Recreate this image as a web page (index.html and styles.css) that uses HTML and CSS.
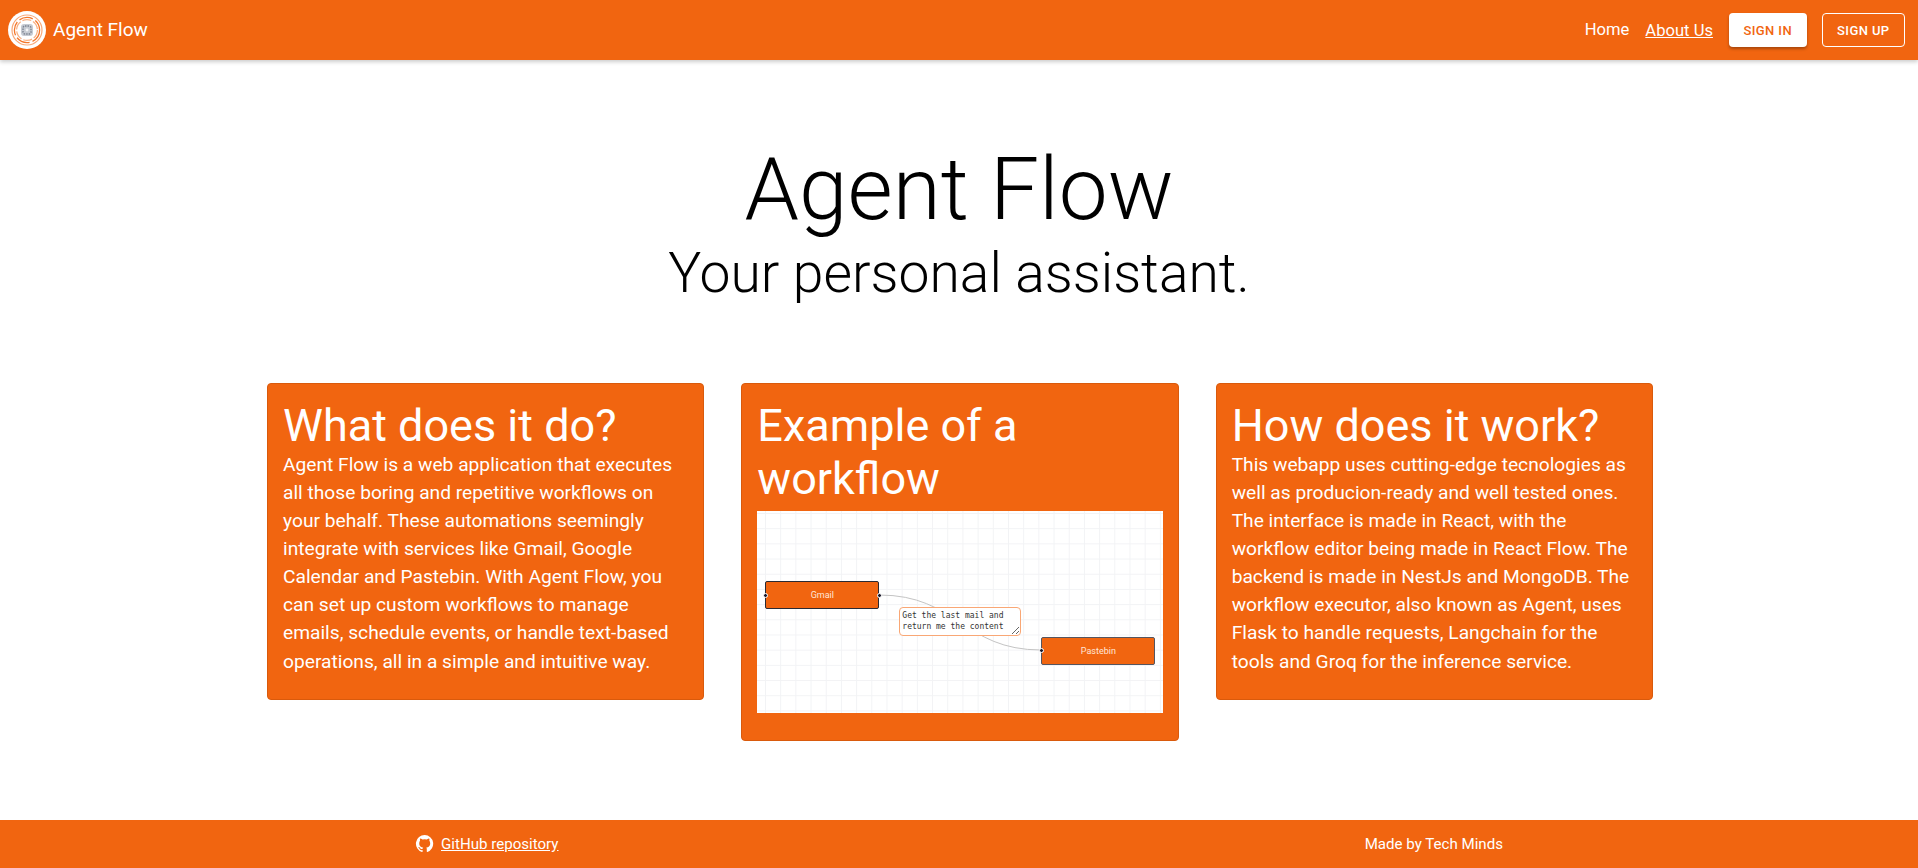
FILE: index.html
```html
<!DOCTYPE html>
<html lang="en">
<head>
    <meta charset="UTF-8">
    <title>Agent Flow</title>
    <link rel="stylesheet" href="styles.css">
</head>
<body>
    <header class="topbar">
        <a class="brand" href="#">
            <svg class="brand-logo" viewBox="0 0 38 38">
                <circle cx="19" cy="19" r="19" fill="#fff"/>
                <circle cx="19" cy="19" r="15.6" fill="#f8a878"/>
                <circle cx="19" cy="19" r="14.4" fill="#fff"/>
                <circle cx="19" cy="19" r="12.6" fill="none" stroke="#f4782c" stroke-width="1.3" stroke-dasharray="14 3"/>
                <circle cx="19" cy="19" r="10.4" fill="none" stroke="#f8b083" stroke-width="1.2" stroke-dasharray="9 2"/>
                <rect x="13" y="13" width="12" height="12" rx="3" fill="#c6cbd3"/>
                <rect x="15" y="15" width="8" height="8" rx="2" fill="none" stroke="#7d8491" stroke-width="1.4" stroke-dasharray="1.5 1"/>
                <circle cx="19" cy="19" r="1.4" fill="#f4f5f7"/>
            </svg>
            <span>Agent Flow</span>
        </a>
        <nav class="topnav">
            <a class="home" href="#">Home</a>
            <a class="current" href="#">About Us</a>
            <button class="btn btn-white">Sign in</button>
            <button class="btn btn-outline">Sign up</button>
        </nav>
    </header>

    <main>
        <section class="hero">
            <h1>Agent Flow</h1>
            <h2>Your personal assistant.</h2>
        </section>

        <section class="cards">
            <article class="card">
                <h3>What does it do?</h3>
                <p>Agent Flow is a web application that executes all those boring and repetitive workflows on your behalf. These automations seemingly integrate with services like Gmail, Google Calendar and Pastebin. With Agent Flow, you can set up custom workflows to manage emails, schedule events, or handle text-based operations, all in a simple and intuitive way.</p>
            </article>
            <article class="card card-tall">
                <h3>Example of a workflow</h3>
                <div class="flow">
                    <svg class="flow-edges" viewBox="0 0 405 202">
                        <path d="M122 84 C200 84 206 139 284 139" fill="none" stroke="#c4c4c4" stroke-width="1"/>
                    </svg>
                    <div class="node node-gmail">Gmail<i class="dot dot-l"></i><i class="dot dot-r"></i></div>
                    <div class="node node-paste">Pastebin<i class="dot dot-l"></i></div>
                    <textarea class="note" readonly>Get the last mail and return me the content</textarea>
                </div>
            </article>
            <article class="card">
                <h3>How does it work?</h3>
                <p>This webapp uses cutting-edge tecnologies as well as producion-ready and well tested ones. The interface is made in React, with the workflow editor being made in React Flow. The backend is made in NestJs and MongoDB. The workflow executor, also known as Agent, uses Flask to handle requests, Langchain for the tools and Groq for the inference service.</p>
            </article>
        </section>
    </main>

    <footer class="bottom">
        <a href="#">
            <svg viewBox="0 0 24 24" width="19.5" height="19.5"><path fill="#fff" d="M12 1.3a10.7 10.7 0 0 0-3.4 20.9c.5.1.7-.2.7-.5v-2c-3 .7-3.6-1.3-3.6-1.3-.5-1.2-1.2-1.6-1.2-1.6-1-.7.1-.7.1-.7 1.1.1 1.6 1.1 1.6 1.1 1 1.7 2.5 1.2 3.2.9.1-.7.4-1.2.7-1.5-2.4-.3-4.9-1.2-4.9-5.3 0-1.2.4-2.1 1.1-2.9-.1-.3-.5-1.4.1-2.8 0 0 .9-.3 2.9 1.1a10 10 0 0 1 5.3 0c2-1.4 2.9-1.1 2.9-1.1.6 1.4.2 2.5.1 2.8.7.8 1.1 1.7 1.1 2.9 0 4.1-2.5 5-4.9 5.3.4.3.7 1 .7 2v3c0 .3.2.6.7.5A10.7 10.7 0 0 0 12 1.3z"/></svg>
            <span>GitHub repository</span>
        </a>
        <span>Made by Tech Minds</span>
    </footer>
</body>
</html>
```

FILE: styles.css
```css
*{
    box-sizing: border-box;
}
body{
    margin: 0;
    font-family: Roboto, "Liberation Sans", sans-serif;
    color: #000;
    background-color: #fff;
}
a{
    color: #fff;
}
.topbar{
    height: 60px;
    padding: 0 13px 0 8px;
    display: flex;
    align-items: center;
    justify-content: space-between;
    background-color: #f16510;
    box-shadow: 0 2px 4px rgba(0,0,0,.2);
}
.brand{
    display: flex;
    align-items: center;
    gap: 7px;
    font-size: 19px;
    text-decoration: none;
}
.brand span{
    padding-bottom: 2px;
}
.brand-logo{
    width: 38px;
    height: 38px;
}
.topnav{
    display: flex;
    align-items: center;
    gap: 15px;
    font-size: 16.6px;
}
.topnav a{
    padding-bottom: 2px;
    text-decoration: none;
}
.topnav a.home{
    margin-right: 1px;
}
.topnav a.current{
    margin-right: 1px;
    padding-bottom: 0;
    text-decoration: underline;
}
.btn{
    height: 34px;
    padding: 0 14.5px;
    font: 500 13px Roboto, sans-serif;
    letter-spacing: .4px;
    text-transform: uppercase;
    border-radius: 4px;
    cursor: pointer;
}
.btn-white{
    color: #f16510;
    background-color: #fff;
    border: 0;
    box-shadow: 0 2px 3px rgba(0,0,0,.3);
}
.btn-outline{
    color: #fff;
    background-color: transparent;
    border: 1px solid #fff;
}
.hero{
    padding-top: 78px;
    text-align: center;
}
.hero h1{
    margin: 0;
    font-size: 87.3px;
    font-weight: 300;
    line-height: 102px;
}
.hero h2{
    margin: 0;
    font-size: 55.2px;
    font-weight: 300;
    line-height: 66px;
}
.cards{
    margin: 77px 265px 0 267px;
    display: flex;
    align-items: flex-start;
    gap: 37px;
}
.card{
    flex: 1;
    min-height: 317px;
    padding: 16px 15px 15px;
    color: #fff;
    background-color: #f16510;
    border: 1px solid #d95a0c;
    border-radius: 4px;
}
.card-tall{
    height: 358px;
}
.card h3{
    margin: 0;
    font-size: 45px;
    font-weight: 400;
    line-height: 52.5px;
}
.card p{
    margin: -2px 0 0;
    font-size: 19.2px;
    line-height: 28.15px;
}
.flow{
    position: relative;
    height: 202px;
    margin-top: 6px;
    background-color: #fff;
    background-image: linear-gradient(#f2f3f5 1px, transparent 1px), linear-gradient(90deg, #f2f3f5 1px, transparent 1px);
    background-size: 15.2px 15.2px;
    background-position: 8px 2px;
}
.flow-edges{
    position: absolute;
    inset: 0;
    width: 100%;
    height: 100%;
}
.node{
    position: absolute;
    width: 114px;
    height: 28px;
    display: flex;
    align-items: center;
    justify-content: center;
    font-size: 9px;
    color: #ffe6d8;
    background-color: #f16510;
    border: 1px solid #2a2a33;
    border-radius: 2px;
}
.node-gmail{
    left: 8px;
    top: 70px;
}
.node-paste{
    left: 284px;
    top: 125.5px;
    border-color: #55555f;
}
.dot{
    position: absolute;
    top: 10.5px;
    width: 5px;
    height: 5px;
    background-color: #1a192b;
    border: 1px solid #fff;
    border-radius: 50%;
}
.dot-l{
    left: -3.5px;
}
.dot-r{
    right: -3.5px;
}
.note{
    position: absolute;
    left: 142px;
    top: 96px;
    width: 122px;
    height: 29px;
    margin: 0;
    padding: 2px 2px 0;
    font: 8px/11px "DejaVu Sans Mono", "Liberation Mono", monospace;
    color: #333;
    background-color: #fff;
    border: 1.5px solid #f9a775;
    border-radius: 4px;
    outline: 0;
    overflow: hidden;
}
.bottom{
    height: 48px;
    margin-top: 79px;
    padding: 0 415px;
    display: flex;
    align-items: center;
    justify-content: space-between;
    font-size: 15.1px;
    color: #fff;
    background-color: #f16510;
}
.bottom a{
    display: flex;
    align-items: center;
    gap: 6.5px;
}
.bottom a svg{
    flex: none;
}
```
